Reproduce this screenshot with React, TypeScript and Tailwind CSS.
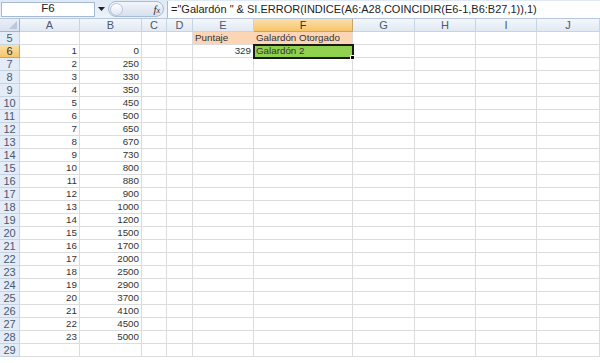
import React from 'react';

const cols = ['A', 'B', 'C', 'D', 'E', 'F', 'G', 'H', 'I', 'J'];
const widths = [60, 62, 25, 26, 61, 99, 62, 61, 61, 63];
const bVals = [0, 250, 330, 350, 450, 500, 650, 670, 730, 800, 880, 900, 1000, 1200, 1500, 1700, 2000, 2500, 2900, 3700, 4100, 4500, 5000];

const font = { fontFamily: '"Liberation Sans", Arial, sans-serif' };

type CellProps = { children?: React.ReactNode; className?: string };

// plain grid cell with Excel-like gridlines
const Cell: React.FC<CellProps> = ({ children, className = '' }) => (
  <div className={`relative h-[13px] border-r border-b border-[#dadcdd] text-[9.8px] leading-[12px] text-[#333] whitespace-nowrap overflow-visible ${className}`}>
    {children}
  </div>
);

export default function App() {
  const rows = Array.from({ length: 25 }, (_, i) => i + 5);

  const renderCell = (row: number, col: number) => {
    const key = `${row}-${col}`;
    if (row >= 6 && row <= 28 && col === 0) {
      return <Cell key={key} className="text-right pr-[2px]">{row - 5}</Cell>;
    }
    if (row >= 6 && row <= 28 && col === 1) {
      return <Cell key={key} className="text-right pr-[2px]">{bVals[row - 6]}</Cell>;
    }
    if (row === 5 && col === 4) {
      return <Cell key={key} className="bg-[#fcd5b4] pl-[2px]">Puntaje</Cell>;
    }
    if (row === 5 && col === 5) {
      return <Cell key={key} className="bg-[#fcd5b4] pl-[2px]">Galardón Otorgado</Cell>;
    }
    if (row === 6 && col === 4) {
      return <Cell key={key} className="text-right pr-[2px]">329</Cell>;
    }
    if (row === 6 && col === 5) {
      return (
        <Cell key={key} className="bg-[#92d050] pl-[2px] z-10">
          Galardón 2
          <div className="absolute -left-[1px] -top-[1px] w-[101px] h-[15px] border-2 border-[#1a1a1a] pointer-events-none" />
          <div className="absolute -right-[3px] -bottom-[3px] w-[5px] h-[5px] bg-black border border-white" />
        </Cell>
      );
    }
    return <Cell key={key} />;
  };

  return (
    <div className="w-[600px] h-[363px] overflow-hidden bg-white" style={font}>
      {/* Formula bar */}
      <div className="h-[19px] flex items-center bg-gradient-to-b from-[#dfe8f5] to-[#eef3fa] border-b border-[#b7c7dd]">
        <div className="ml-[1px] h-[15px] w-[94px] bg-white border border-[#a7bad4] flex items-center justify-center text-[11.5px] text-[#222]">
          F6
        </div>
        <div className="w-[12px] flex justify-center">
          <svg width="7" height="4" viewBox="0 0 7 4"><path d="M0 0h7L3.5 4z" fill="#222" /></svg>
        </div>
        <div className="relative ml-[1px] h-[16px] w-[56px] rounded-full bg-gradient-to-b from-[#f3f6fb] to-[#d6e0ee] border border-[#a9bcd6] flex items-center">
          <div className="ml-[1px] w-[13px] h-[13px] rounded-full bg-gradient-to-b from-white to-[#dfe7f2] border border-[#b5c5db]" />
          <span className="ml-auto mr-[3px] text-[11px] italic text-[#333]" style={{ fontFamily: '"Liberation Serif", serif' }}>
            f<span className="text-[8px]">x</span>
          </span>
        </div>
        <div className="ml-[3px] flex-1 h-[17px] bg-white border-l border-[#a7bad4] flex items-center pl-[3px] text-[11px] text-[#222] whitespace-nowrap overflow-hidden">
          ="Galardón " &amp; SI.ERROR(INDICE(A6:A28,COINCIDIR(E6-1,B6:B27,1)),1)
        </div>
      </div>

      {/* Sheet grid */}
      <div
        className="grid"
        style={{ gridTemplateColumns: `20px ${widths.map((w) => `${w}px`).join(' ')}` }}
      >
        {/* header row */}
        <div className="h-[13px] bg-gradient-to-b from-[#e9eef6] to-[#d9e2ee] border-r border-b border-[#9eb6ce] relative">
          <svg className="absolute right-[2px] bottom-[2px]" width="8" height="8" viewBox="0 0 8 8">
            <path d="M8 0v8H0z" fill="#b8c9dd" />
          </svg>
        </div>
        {cols.map((c) => (
          <div
            key={c}
            className={`h-[13px] border-r border-b text-center text-[11px] leading-[12px] ${
              c === 'F'
                ? 'bg-gradient-to-b from-[#fbe0a8] to-[#f6c56b] border-[#c8a46a] text-[#333]'
                : 'bg-gradient-to-b from-[#f4f7fb] to-[#e2e9f3] border-[#c5d3e3] text-[#4a5a70]'
            }`}
          >
            {c}
          </div>
        ))}

        {rows.map((r) => (
          <React.Fragment key={r}>
            <div
              className={`h-[13px] border-r border-b text-center text-[11px] leading-[12px] ${
                r === 6
                  ? 'bg-gradient-to-b from-[#fbe0a8] to-[#f6c56b] border-[#c8a46a] text-[#333]'
                  : 'bg-[#e4ecf7] border-[#c5d3e3] text-[#4a5a70]'
              }`}
            >
              {r}
            </div>
            {cols.map((_, ci) => renderCell(r, ci))}
          </React.Fragment>
        ))}
      </div>
    </div>
  );
}
